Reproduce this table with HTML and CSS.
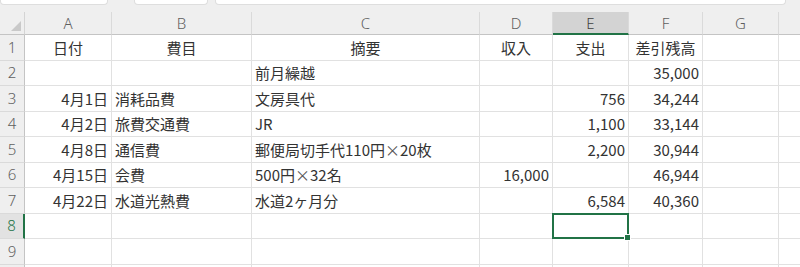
FILE: index.html
```html
<!DOCTYPE html>
<html lang="ja">
<head>
<meta charset="utf-8">
<link rel="stylesheet" href="styles.css">
</head>
<body>
<div class="app">
  <div class="topbar">
    <div class="tbox tbox-name"></div>
    <div class="tbox tbox-fx"></div>
    <div class="tbox tbox-formula"></div>
  </div>
  <div class="sheet">
    <div class="corner"><svg width="10" height="10" viewBox="0 0 10 10"><polygon points="10,0 10,10 0,10" fill="#c9c9c9"/></svg></div>
    <div class="ch">A</div><div class="ch">B</div><div class="ch">C</div><div class="ch">D</div><div class="ch ch-sel">E</div><div class="ch">F</div><div class="ch">G</div><div class="ch ch-last"></div>

    <div class="rh">1</div>
    <div class="c ctr">日付</div><div class="c ctr">費目</div><div class="c ctr">摘要</div><div class="c ctr">収入</div><div class="c ctr">支出</div><div class="c ctr">差引残高</div><div class="c"></div><div class="c last"></div>

    <div class="rh">2</div>
    <div class="c"></div><div class="c"></div><div class="c">前月繰越</div><div class="c"></div><div class="c"></div><div class="c num">35,000</div><div class="c"></div><div class="c last"></div>

    <div class="rh">3</div>
    <div class="c num">4月1日</div><div class="c">消耗品費</div><div class="c">文房具代</div><div class="c"></div><div class="c num">756</div><div class="c num">34,244</div><div class="c"></div><div class="c last"></div>

    <div class="rh">4</div>
    <div class="c num">4月2日</div><div class="c">旅費交通費</div><div class="c">JR</div><div class="c"></div><div class="c num">1,100</div><div class="c num">33,144</div><div class="c"></div><div class="c last"></div>

    <div class="rh">5</div>
    <div class="c num">4月8日</div><div class="c">通信費</div><div class="c">郵便局切手代110円<span class="fw">×</span>20枚</div><div class="c"></div><div class="c num">2,200</div><div class="c num">30,944</div><div class="c"></div><div class="c last"></div>

    <div class="rh">6</div>
    <div class="c num">4月15日</div><div class="c">会費</div><div class="c">500円<span class="fw">×</span>32名</div><div class="c num">16,000</div><div class="c"></div><div class="c num">46,944</div><div class="c"></div><div class="c last"></div>

    <div class="rh">7</div>
    <div class="c num">4月22日</div><div class="c">水道光熱費</div><div class="c">水道2ヶ月分</div><div class="c"></div><div class="c num">6,584</div><div class="c num">40,360</div><div class="c"></div><div class="c last"></div>

    <div class="rh rh-sel">8</div>
    <div class="c"></div><div class="c"></div><div class="c"></div><div class="c"></div><div class="c sel"></div><div class="c"></div><div class="c"></div><div class="c last"></div>

    <div class="rh">9</div>
    <div class="c"></div><div class="c"></div><div class="c"></div><div class="c"></div><div class="c"></div><div class="c"></div><div class="c"></div><div class="c last"></div>

    <div class="rh"></div>
    <div class="c"></div><div class="c"></div><div class="c"></div><div class="c"></div><div class="c"></div><div class="c"></div><div class="c"></div><div class="c last"></div>
  </div>
</div>
</body>
</html>
```
FILE: styles.css
```css
* { box-sizing: border-box; }
html, body {
  margin: 0;
  padding: 0;
  background: #ffffff;
  overflow: hidden;
}
body {
  font-family: "Noto Sans CJK JP", "Noto Sans", sans-serif;
  color: #2b2b2b;
}
.app {
  width: 800px;
  height: 267px;
  background: #efefef;
  overflow: hidden;
}
.topbar {
  display: flex;
  height: 12px;
}
.tbox {
  height: 5px;
  background: #ffffff;
  border: 1px solid #dedede;
  border-top: none;
  border-radius: 0 0 4px 4px;
}
.tbox-name { width: 108px; }
.tbox-fx { width: 74px; margin-left: 26px; }
.tbox-formula { width: 571px; margin-left: 7px; }
.sheet {
  display: grid;
  grid-template-columns: 25px 87px 140px 228px 73px 76px 74px 76px 1fr;
  grid-template-rows: 23px repeat(10, 25.5px);
  background: #ffffff;
  font-size: 15px;
}
.corner {
  background: #efefef;
  border-right: 1px solid #d4d4d4;
  border-bottom: 1px solid #c4c4c4;
  display: flex;
  align-items: flex-end;
  justify-content: flex-end;
  padding: 0 3px 3px 0;
}
.ch {
  background: #efefef;
  color: #5f5f5f;
  font-family: "Noto Sans", "Liberation Sans", sans-serif;
  font-weight: 300;
  font-size: 15px;
  display: flex;
  align-items: center;
  justify-content: center;
  border-right: 1px solid #dadada;
  border-bottom: 1px solid #c4c4c4;
  line-height: 1;
  padding-top: 1px;
}
.ch-last { border-right: none; }
.ch-sel {
  background: #d3d3d3;
  color: #3f3f3f;
  border-bottom: 2px solid #217346;
}
.rh {
  background: #efefef;
  color: #5f5f5f;
  font-family: "Noto Sans", "Liberation Sans", sans-serif;
  font-weight: 300;
  font-size: 15px;
  display: flex;
  align-items: center;
  justify-content: center;
  border-right: 1px solid #c4c4c4;
  border-bottom: 1px solid #dadada;
  line-height: 1;
}
.rh-sel {
  color: #217346;
  border-right: 2px solid #217346;
  background: #e2e2e2;
}
.c {
  border-right: 1px solid #e1e1e1;
  border-bottom: 1px solid #e1e1e1;
  display: flex;
  align-items: center;
  padding: 0 3px;
  white-space: nowrap;
  line-height: 1;
  color: #333333;
}
.c.last { border-right: none; }
.ctr { justify-content: center; }
.num { justify-content: flex-end; padding-right: 3px; }
.fw {
  display: inline-block;
  width: 1em;
  text-align: center;
  color: #555555;
}
.sel {
  position: relative;
  border: 2px solid #217346;
  margin: -1px 0 0 -1px;
}
.sel::after {
  content: "";
  position: absolute;
  right: -4px;
  bottom: -4px;
  width: 5px;
  height: 5px;
  background: #217346;
  border: 1px solid #ffffff;
}
```
